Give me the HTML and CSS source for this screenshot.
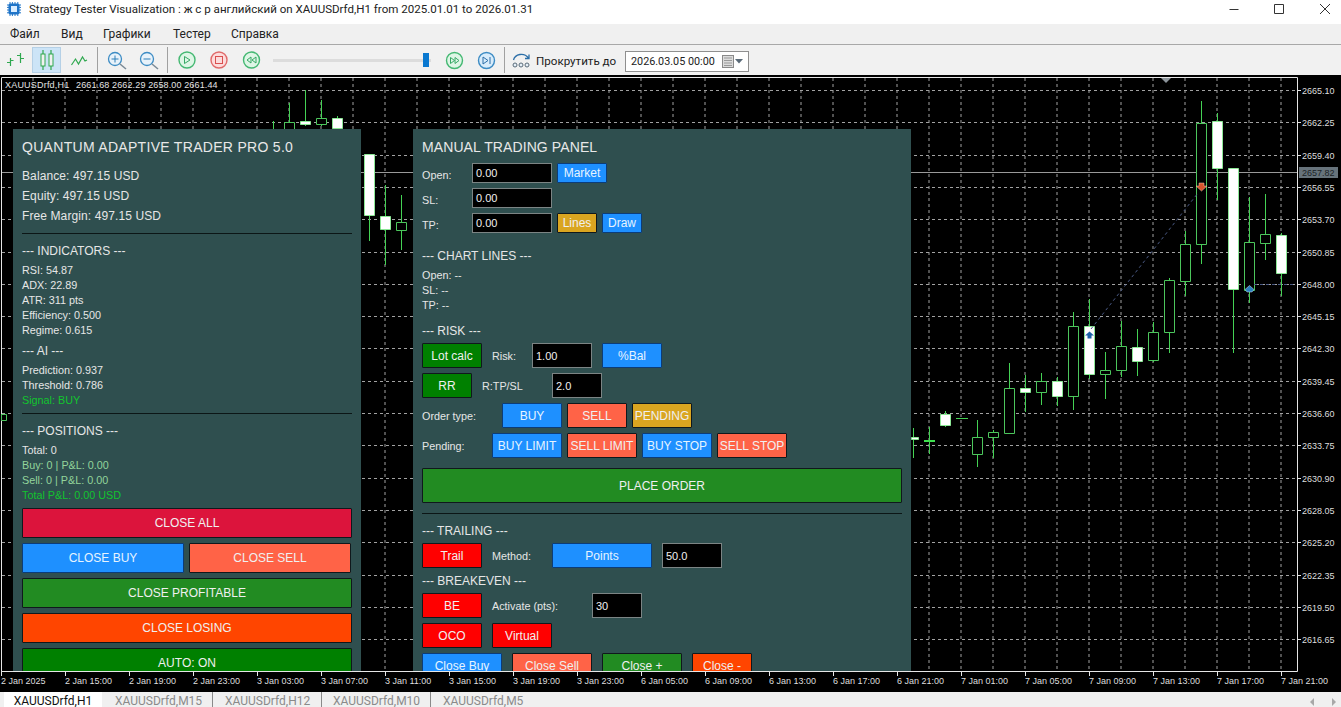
FILE: index.html
```html
<!DOCTYPE html>
<html lang="ru">
<head>
<meta charset="utf-8">
<title>Strategy Tester Visualization</title>
<link rel="stylesheet" href="styles.css">
</head>
<body>
<div class="app">
  <header class="titlebar">
    <svg class="appicon" width="14" height="14" viewBox="0 0 14 14"><path class="pins" d="M3 0v14M5.400 0v14M8 0v14M10.800 0v14M0 3h14M0 5.400h14M0 8h14M0 10.800h14"/><rect class="chip" x="1.500" y="1.500" width="11" height="11" rx="2"/><rect class="core" x="4" y="4" width="6" height="6"/></svg>
    <span class="titletext">Strategy Tester Visualization : ж с р английский on XAUUSDrfd,H1 from 2025.01.01 to 2026.01.31</span>
    <div class="winbtns">
      <svg width="111" height="14" viewBox="0 0 111 14"><path class="winglyph" d="M0.500 9.500h9M45.500 4.500h9v9h-9zM91 4l10 10M101 4l-10 10"/></svg>
    </div>
  </header>
  <nav class="menubar">
    <span class="menu m1">Файл</span><span class="menu m2">Вид</span><span class="menu m3">Графики</span><span class="menu m4">Тестер</span><span class="menu m5">Справка</span>
  </nav>
  <div class="toolbar">
    <svg class="tbicons" width="510" height="30" viewBox="0 45 510 30">
      <rect class="hl" x="32.500" y="47.500" width="28" height="25"/>
      <path class="gi" d="M10.500 58v8M7 62.500h3.500M10.500 60.500h3M20.500 53v10M17 55.500h3.500M20.500 58.500h3.500"/>
      <path class="gi" d="M43 50v20M51 50v20"/><rect class="gb" x="41" y="54" width="4" height="12"/><rect class="gb" x="49" y="54" width="4" height="12"/>
      <path class="gi" d="M71.500 65l4-6 3 5 4-7 2.500 4 2-1"/>
      <path class="sep" d="M97.500 47v26M167.500 47v26M504.500 47v26"/>
      <circle class="zc" cx="115" cy="59" r="6.500"/><path class="zh" d="M120 64l6 5"/><path class="zm" d="M111.500 59h7M115 55.500v7"/>
      <circle class="zc" cx="147" cy="59" r="6.500"/><path class="zh" d="M152 64l6 5"/><path class="zm" d="M143.500 59h7"/>
      <circle class="rg" cx="187" cy="60" r="8"/><path class="rgi" d="M184.500 56.500v7l5.500-3.500z"/>
      <circle class="rr" cx="219" cy="60" r="8"/><rect class="rri" x="215.500" y="56.500" width="7" height="7"/>
      <circle class="rg" cx="251.500" cy="60" r="8"/><path class="rgi" d="M251 57v6l-4-3zM256 57v6l-4-3z"/>
      <rect class="track" x="273" y="59" width="158" height="3"/><rect class="thumb" x="423" y="53" width="6" height="14"/>
      <circle class="rg" cx="454.500" cy="60.500" r="8"/><path class="rgi" d="M450.500 57.500v6l4-3zM455 57.500v6l4-3z"/>
      <circle class="rb" cx="486.500" cy="60.500" r="8"/><path class="rbi" d="M483 57v7l5-3.500zM490 57v7"/>
    </svg>
    <svg class="scrollicon" width="20" height="20" viewBox="0 0 20 20"><path class="sa" d="M1.500 9C3 3 12 1 16.500 7M13 7.500h4v-4"/><circle class="sc" cx="3" cy="14" r="2"/><circle class="sc" cx="9" cy="14" r="2"/><circle class="sc" cx="15" cy="14" r="2"/></svg>
    <span class="scrolltext">Прокрутить до</span>
    <div class="datebox">
      <span class="datetext">2026.03.05 00:00</span>
      <svg class="dateicon" width="22" height="13" viewBox="0 0 22 13"><rect class="cal" x="0.500" y="0.500" width="11" height="12"/><path class="calg" d="M2 3h8M2 5.500h8M2 8h8M2 10.500h8"/><path class="caret" d="M13 4h8l-4 4.500z"/></svg>
    </div>
  </div>

  <main class="chart">
    <svg class="chartsvg" width="1341" height="617" viewBox="0 75 1341 617">
      <path class="grid" d="M33 78V671M65 78V671M97 78V671M129 78V671M161 78V671M193 78V671M225 78V671M257 78V671M289 78V671M321 78V671M353 78V671M385 78V671M417 78V671M449 78V671M481 78V671M513 78V671M545 78V671M577 78V671M609 78V671M641 78V671M673 78V671M705 78V671M737 78V671M769 78V671M801 78V671M833 78V671M865 78V671M897 78V671M929 78V671M961 78V671M993 78V671M1025 78V671M1057 78V671M1089 78V671M1121 78V671M1153 78V671M1185 78V671M1217 78V671M1249 78V671M1281 78V671"/>
      <path class="grid" d="M2 90.500H1297M2 122.500H1297M2 155.500H1297M2 187.500H1297M2 219.500H1297M2 252.500H1297M2 284.500H1297M2 316.500H1297M2 348.500H1297M2 381.500H1297M2 413.500H1297M2 445.500H1297M2 478.500H1297M2 510.500H1297M2 542.500H1297M2 575.500H1297M2 607.500H1297M2 639.500H1297"/>
      <path class="bid" d="M2 172.500H1297"/>
      <path class="frame" d="M1.500 77.500H1297.500V671.500H1.500Z"/>
      <path class="tick" d="M1297 90.500h4M1297 122.500h4M1297 155.500h4M1297 187.500h4M1297 219.500h4M1297 252.500h4M1297 284.500h4M1297 316.500h4M1297 348.500h4M1297 381.500h4M1297 413.500h4M1297 445.500h4M1297 478.500h4M1297 510.500h4M1297 542.500h4M1297 575.500h4M1297 607.500h4M1297 639.500h4"/>
      <path class="tick" d="M1.500 671v5M65.500 671v5M129.500 671v5M193.500 671v5M257.500 671v5M321.500 671v5M385.500 671v5M449.500 671v5M513.500 671v5M577.500 671v5M641.500 671v5M705.500 671v5M769.500 671v5M833.500 671v5M897.500 671v5M961.500 671v5M1025.500 671v5M1089.500 671v5M1153.500 671v5M1217.500 671v5M1281.500 671v5"/>
      <path class="shift" d="M1161 78h10l-5 5z"/>

      <path class="wick" d="M273.500 121v10M289.500 103v28M305.500 90v36M321.500 100v26M337.500 116v14M369.500 215v26M385.500 185v80M401.500 195v55M913.500 428v30M929.500 427v27M945.500 411v16M977.500 420v47M993.500 430v28M1009.500 363v71M1025.500 375v37M1041.500 373v32M1057.500 377v29M1073.500 312v98M1089.500 299v80M1105.500 352v47M1121.500 321v56M1137.500 329v47M1153.500 322v40M1169.500 278v75M1185.500 231v65M1201.500 101v163M1217.500 113v87M1233.500 168v185M1249.500 197v106M1265.500 194v66M1281.500 233v63"/>
      <path class="wick" d="M956 418.500h12"/>
      <rect class="doji" x="924" y="440" width="11" height="2"/>
      <path class="hollow" d="M284.500 122.500h10v9h-10zM316.500 118.500h10v6h-10zM396.500 222.500h10v8h-10zM972.500 437.500h10v17h-10zM988.500 432.500h10v5h-10zM1004.500 388.500h10v45h-10zM1036.500 381.500h10v11h-10zM1068.500 326.500h10v70h-10zM1100.500 370.500h10v4h-10zM1116.500 346.500h10v24h-10zM1148.500 332.500h10v28h-10zM1164.500 280.500h10v52h-10zM1180.500 244.500h10v37h-10zM1196.500 123.500h10v121h-10zM1244.500 242.500h10v48h-10zM1260.500 234.500h10v9h-10zM1.500 414.500h5v6h-5z"/>
      <path class="filled" d="M300.500 121.500h10v3h-10zM332.500 118.500h10v10h-10zM364.500 154.500h10v61h-10zM380.500 216.500h10v13h-10zM911.500 437.500h7v2h-7zM940.500 414.500h10v11h-10zM1020.500 388.500h10v4h-10zM1052.500 381.500h10v15h-10zM1084.500 326.500h10v48h-10zM1132.500 347.500h10v14h-10zM1212.500 121.500h10v47h-10zM1228.500 168.500h10v121h-10zM1276.500 235.500h10v38h-10z"/>
      <path class="trade" d="M1091 329L1198 193M1254 284.500H1295"/>
      <path class="arrowb" d="M1089.500 331.500l4.500 4h-2.500v3h-4v-3H1085z"/>
      <path class="arrowr" d="M1199 183h5v3h3l-5.500 5-5.500-5h3z"/>
      <path class="arrowd" d="M1249.500 285.500l4.500 4-2 2.500h-5l-2-2.500z"/>

      <text class="ohlc sym" x="5" y="88">XAUUSDrfd,H1</text>
      <text class="ohlc prices" x="76" y="88">2661.68 2662.29 2658.00 2661.44</text>

      <rect class="bidlabel" x="1299" y="167" width="39" height="11"/>
      <text class="bidtext" x="1302" y="176">2657.82</text>
      <text class="axis" x="1302" y="94">2665.10</text>
      <text class="axis" x="1302" y="126">2662.25</text>
      <text class="axis" x="1302" y="159">2659.40</text>
      <text class="axis" x="1302" y="191">2656.55</text>
      <text class="axis" x="1302" y="223">2653.70</text>
      <text class="axis" x="1302" y="256">2650.85</text>
      <text class="axis" x="1302" y="288">2648.00</text>
      <text class="axis" x="1302" y="320">2645.15</text>
      <text class="axis" x="1302" y="352">2642.30</text>
      <text class="axis" x="1302" y="385">2639.45</text>
      <text class="axis" x="1302" y="417">2636.60</text>
      <text class="axis" x="1302" y="449">2633.75</text>
      <text class="axis" x="1302" y="482">2630.90</text>
      <text class="axis" x="1302" y="514">2628.05</text>
      <text class="axis" x="1302" y="546">2625.20</text>
      <text class="axis" x="1302" y="579">2622.35</text>
      <text class="axis" x="1302" y="611">2619.50</text>
      <text class="axis" x="1302" y="643">2616.65</text>

      <text class="axis" x="1" y="684">2 Jan 2025</text>
      <text class="axis" x="65" y="684">2 Jan 15:00</text>
      <text class="axis" x="129" y="684">2 Jan 19:00</text>
      <text class="axis" x="193" y="684">2 Jan 23:00</text>
      <text class="axis" x="257" y="684">3 Jan 03:00</text>
      <text class="axis" x="321" y="684">3 Jan 07:00</text>
      <text class="axis" x="385" y="684">3 Jan 11:00</text>
      <text class="axis" x="449" y="684">3 Jan 15:00</text>
      <text class="axis" x="513" y="684">3 Jan 19:00</text>
      <text class="axis" x="577" y="684">3 Jan 23:00</text>
      <text class="axis" x="641" y="684">6 Jan 05:00</text>
      <text class="axis" x="705" y="684">6 Jan 09:00</text>
      <text class="axis" x="769" y="684">6 Jan 13:00</text>
      <text class="axis" x="833" y="684">6 Jan 17:00</text>
      <text class="axis" x="897" y="684">6 Jan 21:00</text>
      <text class="axis" x="961" y="684">7 Jan 01:00</text>
      <text class="axis" x="1025" y="684">7 Jan 05:00</text>
      <text class="axis" x="1089" y="684">7 Jan 09:00</text>
      <text class="axis" x="1153" y="684">7 Jan 13:00</text>
      <text class="axis" x="1217" y="684">7 Jan 17:00</text>
      <text class="axis" x="1281" y="684">7 Jan 21:00</text>
    </svg>

    <section class="panel panel-left">
      <h1 class="ptitle">QUANTUM ADAPTIVE TRADER PRO 5.0</h1>
      <div class="big first">Balance: 497.15 USD</div>
      <div class="big">Equity: 497.15 USD</div>
      <div class="big">Free Margin: 497.15 USD</div>
      <hr class="rule r-a">
      <div class="head h-a">--- INDICATORS ---</div>
      <div class="small s-a">RSI: 54.87</div>
      <div class="small">ADX: 22.89</div>
      <div class="small">ATR: 311 pts</div>
      <div class="small">Efficiency: 0.500</div>
      <div class="small">Regime: 0.615</div>
      <div class="head h-b">--- AI ---</div>
      <div class="small s-b">Prediction: 0.937</div>
      <div class="small">Threshold: 0.786</div>
      <div class="small lime">Signal: BUY</div>
      <hr class="rule r-b">
      <div class="head h-c">--- POSITIONS ---</div>
      <div class="small s-c">Total: 0</div>
      <div class="small pale">Buy: 0 | P&amp;L: 0.00</div>
      <div class="small pale">Sell: 0 | P&amp;L: 0.00</div>
      <div class="small lime">Total P&amp;L: 0.00 USD</div>
      <div class="stack">
        <button class="btn crimson wide">CLOSE ALL</button>
        <div class="split"><button class="btn blue half">CLOSE BUY</button><button class="btn tomato half">CLOSE SELL</button></div>
        <button class="btn forest wide">CLOSE PROFITABLE</button>
        <button class="btn orange wide">CLOSE LOSING</button>
        <button class="btn green wide">AUTO: ON</button>
      </div>
    </section>

    <section class="panel panel-right">
      <h1 class="ptitle">MANUAL TRADING PANEL</h1>
      <div class="row r20 first-row"><span class="lab w50 lowered">Open:</span><span class="inp w80">0.00</span><button class="btn blue w50 ml5">Market</button></div>
      <div class="row r20 gap5top"><span class="lab w50 lowered">SL:</span><span class="inp w80">0.00</span></div>
      <div class="row r20 gap5top"><span class="lab w50 lowered">TP:</span><span class="inp w80">0.00</span><button class="btn gold w40 ml5">Lines</button><button class="btn blue w40 ml5">Draw</button></div>
      <div class="head h-d">--- CHART LINES ---</div>
      <div class="small s-d">Open: --</div>
      <div class="small">SL: --</div>
      <div class="small">TP: --</div>
      <div class="head h-e">--- RISK ---</div>
      <div class="row r25 tight"><button class="btn green w60">Lot calc</button><span class="lab w40 ml10">Risk:</span><span class="inp w60">1.00</span><button class="btn blue w60 ml10">%Bal</button></div>
      <div class="row r25 gap5top"><button class="btn green w50">RR</button><span class="lab w70 ml10">R:TP/SL</span><span class="inp w50">2.0</span></div>
      <div class="row r25 gap5top"><span class="lab w80">Order type:</span><button class="btn blue w60">BUY</button><button class="btn tomato w60 ml5">SELL</button><button class="btn gold w60 ml5">PENDING</button></div>
      <div class="row r25 gap5top"><span class="lab w70">Pending:</span><button class="btn blue w70">BUY LIMIT</button><button class="btn tomato w70 ml5">SELL LIMIT</button><button class="btn blue w70 ml5">BUY STOP</button><button class="btn tomato w70 ml5">SELL STOP</button></div>
      <button class="btn forest place">PLACE ORDER</button>
      <hr class="rule r-c">
      <div class="head h-f">--- TRAILING ---</div>
      <div class="row r25 tight"><button class="btn red w60">Trail</button><span class="lab w60 ml10">Method:</span><button class="btn blue w100">Points</button><span class="inp w60 ml10">50.0</span></div>
      <div class="head h-g">--- BREAKEVEN ---</div>
      <div class="row r25 tight"><button class="btn red w60">BE</button><span class="lab w100 ml10">Activate (pts):</span><span class="inp w50">30</span></div>
      <div class="row r25 gap5top"><button class="btn red w60">OCO</button><button class="btn red w60 ml10">Virtual</button></div>
      <div class="row r25 gap5top"><button class="btn blue w80">Close Buy</button><button class="btn tomato w80 ml10">Close Sell</button><button class="btn forest w80 ml10">Close +</button><button class="btn orange w60 ml10">Close -</button></div>
    </section>
  </main>

  <footer class="tabs">
    <span class="tab active">XAUUSDrfd,H1</span>
    <span class="tab t-m15">XAUUSDrfd,M15</span>
    <span class="tab t-h12">XAUUSDrfd,H12</span>
    <span class="tab t-m10">XAUUSDrfd,M10</span>
    <span class="tab t-m5">XAUUSDrfd,M5</span>
    <svg class="tabarrows" width="26" height="10" viewBox="0 0 26 10"><path class="tabarrow" d="M4 1v8L0 5zM22 1v8l4-4z"/></svg>
  </footer>
</div>
</body>
</html>
```
FILE: styles.css
```css
* { box-sizing: border-box; }
html, body { margin: 0; padding: 0; }
body { width: 1341px; height: 707px; overflow: hidden; background: #f0f0f0; font-family: "Liberation Sans", Arial, sans-serif; }
.app { display: flex; flex-direction: column; width: 1341px; height: 707px; }

/* title bar */
.titlebar { height: 24px; background: #fff; display: flex; align-items: center; padding-left: 7px; position: relative; }
.appicon { flex: none; margin-top: -6px; }
.pins { stroke: #1f74c8; stroke-width: 1; fill: none; }
.chip { fill: #1f74c8; }
.core { fill: #d8ecff; }
.titletext { margin-left: 8px; margin-top: -6px; font: 11.550px Roboto, "Noto Sans", sans-serif; color: #222; white-space: nowrap; }
.winbtns { margin-left: auto; margin-right: 1px; margin-top: -10px; display: flex; }
.winglyph { fill: none; stroke: #333; stroke-width: 1; }

/* menu */
.menubar { height: 21px; background: #f0f0f0; border-bottom: 1px solid #a8a8a8; display: flex; align-items: center; font: 12px Roboto, sans-serif; color: #222; }
.menu { white-space: nowrap; }
.m1 { margin-left: 10px; width: 51px; }
.m2 { width: 42px; }
.m3 { width: 70px; }
.m4 { width: 58px; }
.m5 { width: 60px; }

/* toolbar */
.toolbar { height: 30px; background: #f1f1f1; display: flex; align-items: center; }
.tbicons { flex: none; }
.hl { fill: #cce4f7; stroke: #b5d0e6; }
.gi { fill: none; stroke: #2fa84f; stroke-width: 1.200; }
.gb { fill: #f1f1f1; stroke: #2fa84f; }
.sep { stroke: #a0a0a0; stroke-width: 1; }
.zc { fill: #e8f2fa; stroke: #3d8cc4; stroke-width: 1.300; }
.zh { stroke: #7a8a96; stroke-width: 1.500; }
.zm { stroke: #2c7fb8; stroke-width: 1; }
.rg { fill: #def6e6; stroke: #45b873; stroke-width: 1.400; }
.rgi { fill: none; stroke: #37a865; stroke-width: 1; }
.rr { fill: #fcdcdc; stroke: #e06a6a; stroke-width: 1.400; }
.rri { fill: none; stroke: #d94f4f; stroke-width: 1; }
.rb { fill: #d8ecfb; stroke: #3d8cc4; stroke-width: 1.400; }
.rbi { fill: none; stroke: #2c6fa8; stroke-width: 1; }
.track { fill: #dcdcdc; }
.thumb { fill: #0a78d0; }
.scrollicon { flex: none; margin-left: 2px; margin-top: 1px; }
.sa { fill: none; stroke: #2c6fa8; stroke-width: 1.300; }
.sc { fill: #e6f0f8; stroke: #5a6a78; stroke-width: 1; }
.scrolltext { margin-left: 4px; width: 89px; margin-top: 2px; font: 11.600px Roboto, sans-serif; color: #222; white-space: nowrap; }
.datebox { width: 124px; height: 21px; margin-top: 2px; background: #fff; border: 1px solid #8f8f8f; display: flex; align-items: center; padding-left: 5px; }
.datetext { font: 10.800px Roboto, sans-serif; color: #222; white-space: nowrap; width: 91px; }
.dateicon { flex: none; }
.cal { fill: #dcdcdc; stroke: #8a8a8a; }
.calg { stroke: #9a9a9a; stroke-width: 1; }
.caret { fill: #5a6a78; }

/* chart */
.chart { position: relative; height: 617px; background: #000; overflow: hidden; flex: none; }
.chartsvg { display: block; }
.grid { stroke: #a2a2a2; stroke-width: 1; stroke-dasharray: 3 3; fill: none; }
.bid { stroke: #9a9a9a; stroke-width: 1; }
.frame { stroke: #e6e6e6; stroke-width: 1; fill: none; }
.tick { stroke: #e6e6e6; stroke-width: 1; }
.shift { fill: #8c949a; }
.wick { stroke: #44d254; stroke-width: 1; fill: none; }
.doji { fill: #3fe04f; }
.hollow { stroke: #4cc65c; stroke-width: 1; fill: #000; }
.filled { stroke: #8ce896; stroke-width: 1; fill: #fff; }
.trade { stroke: #4a5a85; stroke-width: 1; stroke-dasharray: 3 3; fill: none; }
.arrowb { fill: #1d63a8; }
.arrowr { fill: #d9542c; stroke: #f0c8b0; stroke-width: .5; }
.arrowd { fill: #2a7fbe; stroke: #cfe6f5; stroke-width: .5; }
.ohlc { fill: #e4e4e4; font: 9px "Liberation Sans", sans-serif; }
.sym { letter-spacing: .2px; }
.prices { letter-spacing: .13px; }
.axis { fill: #dedede; font: 9px "Liberation Sans", sans-serif; }
.bidlabel { fill: #67737b; }
.bidtext { fill: #1c2327; font: 9px "Liberation Sans", sans-serif; }

/* panels */
.panel { position: absolute; top: 54px; height: 542px; background: #2f4f4f; overflow: hidden; color: #e6e6e6; padding-left: 9px; display: flex; flex-direction: column; }
.panel-left { left: 13px; width: 348px; }
.panel-right { left: 413px; width: 498px; }
.ptitle { margin: 8px 0 0; height: 20px; line-height: 20px; font-size: 14px; font-weight: 400; color: #e8e8e8; white-space: nowrap; }
.panel-left .ptitle { letter-spacing: .3px; }
.panel-right .ptitle { letter-spacing: .1px; }
.big { height: 20px; line-height: 20px; font-size: 12px; letter-spacing: .1px; white-space: nowrap; }
.big.first { margin-top: 9px; }
.head { height: 20px; line-height: 20px; font-size: 12px; white-space: nowrap; }
.small { height: 15px; line-height: 17px; font-size: 10.800px; white-space: nowrap; }
.lime { color: #12c42e; }
.pale { color: #93d59b; }
.rule { margin: 0; border: 0; height: 1px; background: #0c1616; flex: none; }
.panel-left .rule { width: 330px; }
.r-a { margin-top: 7px; }
.h-a { margin-top: 7px; }
.s-a { margin-top: 1px; }
.h-b { margin-top: 4px; }
.s-b { margin-top: 1px; }
.r-b { margin-top: 6px; }
.h-c { margin-top: 7px; }
.s-c { margin-top: 1px; }
.stack { margin-top: 6px; display: flex; flex-direction: column; gap: 5px; }
.split { display: flex; gap: 5px; }
.btn { flex: none; display: block; margin: 0; padding: 0; border: 1px solid #10181c; border-radius: 1px; font: 12px "Liberation Sans", sans-serif; color: #f0f0f0; text-align: center; white-space: nowrap; overflow: hidden; }
.stack .btn { height: 30px; }
.wide { width: 330px; }
.half { width: 162px; }
.crimson { background: #dc143c; }
.blue { background: #1e90ff; color: #e6f4ff; border-color: #0c3c78; }
.tomato { background: #ff6347; }
.forest { background: #228b22; }
.orange { background: #ff4500; }
.green { background: #008000; }
.gold { background: #daa520; }
.red { background: #ff0000; }

.row { display: flex; align-items: stretch; flex: none; }
.r20 { height: 20px; }
.r25 { height: 25px; }
.first-row { margin-top: 6px; }
.gap5top { margin-top: 5px; }
.tight { margin-top: 2px; }
.lab { font-size: 10.800px; display: flex; align-items: center; white-space: nowrap; flex: none; }
.lowered { padding-top: 4px; }
.inp { flex: none; background: #000; border: 1px solid #7c8484; color: #f0f0f0; font-size: 11px; display: flex; align-items: center; padding-left: 3px; white-space: nowrap; }
.w40 { width: 40px; }
.w50 { width: 50px; }
.w60 { width: 60px; }
.w70 { width: 70px; }
.w80 { width: 80px; }
.w100 { width: 100px; }
.ml5 { margin-left: 5px; }
.ml10 { margin-left: 10px; }
.h-d { margin-top: 13px; }
.s-d { margin-top: 1px; }
.h-e { margin-top: 9px; }
.place { width: 480px; height: 35px; margin-top: 10px; }
.panel-right .rule { width: 480px; margin-top: 10px; }
.h-f { margin-top: 7px; }
.h-g { margin-top: 3px; }

/* tabs */
.tabs { position: relative; height: 15px; background: #f0f0f0; overflow: hidden; font: 12px Roboto, sans-serif; color: #8a8a8a; display: flex; align-items: flex-start; }
.tab { height: 20px; line-height: 19px; white-space: nowrap; border-right: 1px solid #8a8a8a; flex: none; }
.tab.active { margin-left: 4px; width: 98px; text-align: center; background: #fff; color: #111; border: 0; }
.t-m15 { width: 111px; padding-left: 13px; }
.t-h12 { width: 109px; padding-left: 12px; }
.t-m10 { width: 109px; padding-left: 11px; }
.tab.t-m5 { padding-left: 12px; border-right: 0; }
.tabarrows { position: absolute; right: 5px; top: 5px; }
.tabarrow { fill: #a8a8a8; }
```
